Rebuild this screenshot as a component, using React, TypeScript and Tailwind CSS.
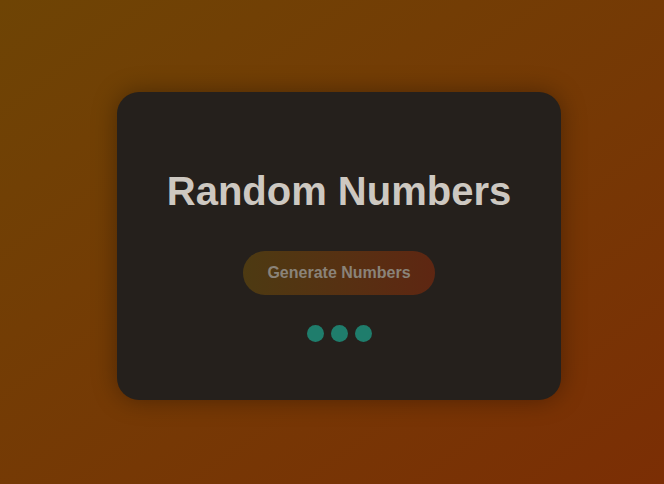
export default function App() {
  return (
    <div className="w-[664px] h-[484px] flex items-center justify-center pl-[14px] pt-[8px] bg-gradient-to-br from-[#6e4405] to-[#7b2e05] font-['Liberation_Sans',Arial,sans-serif]">
      <div className="w-[444px] h-[308px] rounded-[22px] bg-[#25201c] shadow-[0_0_24px_rgba(0,0,0,0.35)] flex flex-col items-center pt-[79px]">
        <h1 className="text-[40px] leading-[40px] font-bold text-[#cdc8c1]">Random Numbers</h1>
        <button className="mt-[40px] w-[192px] h-[44px] rounded-full bg-gradient-to-r from-[#4d3a12] to-[#5e2612] text-[16px] font-bold text-[#8a8379]">
          Generate Numbers
        </button>
        <div className="mt-[30px] flex gap-[7px]">
          <span className="w-[17px] h-[17px] rounded-full bg-[#1f7d6c]" />
          <span className="w-[17px] h-[17px] rounded-full bg-[#1f7d6c]" />
          <span className="w-[17px] h-[17px] rounded-full bg-[#1f7d6c]" />
        </div>
      </div>
    </div>
  );
}
